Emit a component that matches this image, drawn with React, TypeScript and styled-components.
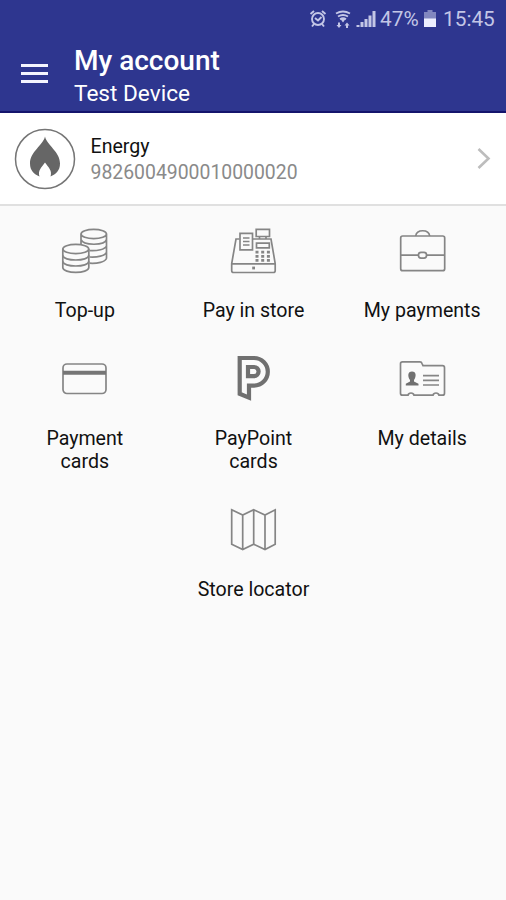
import React from 'react';
import styled, { createGlobalStyle } from 'styled-components';

const GlobalStyle = createGlobalStyle`
  * { box-sizing: border-box; }
  body { margin: 0; background: #fafafa; font-family: Roboto, sans-serif; }
`;

const Screen = styled.div`
  display: flex;
  flex-direction: column;
  width: 506px;
  height: 900px;
  overflow: hidden;
  background: #fafafa;
  color: #111;
`;

const Header = styled.header`
  height: 113px;
  background: #2e368f;
  border-bottom: 2px solid #14146c;
  color: #fff;
`;

const StatusBar = styled.div`
  display: flex;
  align-items: center;
  justify-content: flex-end;
  height: 38px;
  padding-right: 11px;
  color: #c3c6e6;
`;

const StatusIcons = styled.svg`
  display: block;
  width: 68px;
  height: 24px;
  margin-right: 4px;
`;

const BatteryIcon = styled.svg`
  display: block;
  width: 12px;
  height: 20px;
  margin: 0 7px 0 4px;
`;

const StatusText = styled.span<{ $width: number }>`
  width: ${(p) => p.$width}px;
  font-size: 20.8px;
  line-height: 24px;
  white-space: nowrap;
`;

const TitleRow = styled.div`
  display: flex;
  align-items: center;
  height: 70px;
  padding-left: 21px;
`;

const MenuButton = styled.button`
  display: flex;
  flex-direction: column;
  gap: 5px;
  width: 27px;
  padding: 0;
  border: 0;
  background: none;
`;

const MenuBar = styled.span`
  height: 3px;
  background: #f4f5ff;
`;

const Titles = styled.div`
  margin: 8px 0 0 26px;
`;

const Title = styled.h1`
  margin: 0;
  font-size: 28px;
  font-weight: 500;
  line-height: 34px;
`;

const Subtitle = styled.div`
  font-size: 22.6px;
  line-height: 32px;
`;

const Account = styled.section`
  display: flex;
  align-items: center;
  height: 93px;
  padding: 0 15px 0 14px;
  background: #fff;
  border-bottom: 2px solid #e0e0e0;
`;

const FlameBadge = styled.svg`
  width: 62px;
  height: 62px;
  flex: none;
`;

const AccountText = styled.div`
  flex: 1;
  margin-left: 14.5px;
  padding-top: 2px;
  font-size: 19.6px;
  line-height: 26px;
`;

const AccountNumber = styled.div`
  color: #8a8a8a;
  font-size: 19.4px;
`;

const Chevron = styled.svg`
  width: 14px;
  height: 24px;
`;

const Menu = styled.main`
  display: grid;
  grid-template-columns: repeat(3, 1fr);
`;

const Tile = styled.div<{ $column?: number }>`
  display: flex;
  flex-direction: column;
  align-items: center;
  padding: 20px 0 12px;
  ${(p) => p.$column && `grid-column: ${p.$column};`}
`;

const TileIcon = styled.svg`
  width: 48px;
  height: 48px;
  fill: none;
  stroke: #858585;
  stroke-width: 1.7;
`;

const TileLabel = styled.div`
  width: 130px;
  margin-top: 25px;
  padding-left: 1px;
  font-size: 19.6px;
  line-height: 23px;
  text-align: center;
`;

const Coins = () => (
  <TileIcon viewBox="0 0 48 48">
    <path d="M21 8v24.500M46.500 8v24.500M21 8a12.750 4.700 0 0 0 25.500 0a12.750 4.700 0 0 0-25.500 0M21 13.500c2 6.300 24 6.300 25.500 0M29.500 24.600c8 .5 15.500-1.200 17-4.600M29.500 31c8 .5 15.500-1.200 17-4.600M29.500 37.200c8 .5 15.500-1.200 17-4.700" />
    <path fill="#fafafa" d="M2.800 23v18.500c0 6.500 26 6.500 26 0V23a13 4.700 0 0 0-26 0Z" />
    <path d="M2.800 23a13 4.700 0 0 0 26 0M2.800 29.300c0 6.300 26 6.300 26 0M2.800 35.300c0 6.300 26 6.300 26 0" />
  </TileIcon>
);

const Register = () => (
  <TileIcon viewBox="0 0 48 48">
    <path d="M10.500 13H7L2.700 37.500v7.300q0 1.700 2 1.700h39.500q2 0 2-1.700v-7.300L42 13H24M2.700 37.800h43.500" />
    <path d="M11 7.300h12.500v16.500H11zM14 12h6.500M14 15.500h6.500M14 19h6.500M27.200 3.300h13.300v7.200H27.200zM30.500 10.500v2.500M37 10.500v2.500M27.500 17.200h12.800v4.600H27.500z" />
    <path strokeWidth="2.800" strokeDasharray="3 2.700" d="M26.500 26.200h15M26.500 30.300h15M26.500 34.400h15" />
    <path strokeWidth="2.800" d="M23.200 42H26" />
  </TileIcon>
);

const Briefcase = () => (
  <TileIcon viewBox="0 0 48 48">
    <rect x="2.700" y="10" width="44" height="34.700" rx="2" />
    <path d="M17.700 10c1-7 13-7 14 0M3 29.200h17.500M28.500 29.200h18" />
    <rect x="20.500" y="26.300" width="8" height="5.800" rx="2.500" />
  </TileIcon>
);

const Card = () => (
  <TileIcon viewBox="0 0 48 48">
    <rect x="3" y="10" width="43" height="29.500" rx="4" />
    <path stroke="#757575" strokeWidth="4" d="M3 18.800h43" />
  </TileIcon>
);

const PayPoint = () => (
  <TileIcon viewBox="0 0 48 48">
    <path stroke="#707070" strokeWidth="4.200" d="M10.700 4h14.300a13.800 13.800 0 0 1 0 27.600h-5v12l-9.300-3.800z" />
    <path stroke="#707070" strokeWidth="4.200" d="M19 13h6a4.600 4.600 0 0 1 0 9.200h-6z" />
  </TileIcon>
);

const Details = () => (
  <TileIcon viewBox="0 0 48 48">
    <path d="M4.500 7.800H22q1.500 0 2 1.700l1 2.200h19.500q2 0 2 2v25.500q0 2-2 2H41q-.5-2.200-3-2.200T35 41.200H16q-.5-2.200-3-2.200t-3 2.200H4.500q-2 0-2-2V9.800q0-2 2-2Z" />
    <path d="M25 21.700h16M25 26.400h16M25 31h16" />
    <path fill="#707070" stroke="none" d="M14 17.500c4.500 0 4.400 5 2 8.500v1.500l4.500 2.200V31.600H7.800v-1.900l4.200-2.200V26c-2.500-3.500-2.500-8.500 2-8.500Z" />
  </TileIcon>
);

const MapIcon = () => (
  <TileIcon viewBox="0 0 48 48">
    <path d="M2.700 4.800 13.700 10 24.700 4.800 36 10 46.200 4.800V39.200L36 44.500 24.700 39.200 13.700 44.500 2.700 39.200ZM13.700 10v34.500M24.700 4.800v34.400M36 10v34.500" />
  </TileIcon>
);

const tiles: { label: string; Icon: React.FC; column?: number }[] = [
  { label: 'Top-up', Icon: Coins },
  { label: 'Pay in store', Icon: Register },
  { label: 'My payments', Icon: Briefcase },
  { label: 'Payment cards', Icon: Card },
  { label: 'PayPoint cards', Icon: PayPoint },
  { label: 'My details', Icon: Details },
  { label: 'Store locator', Icon: MapIcon, column: 2 },
];

export default function App() {
  return (
    <Screen>
      <GlobalStyle />
      <Header>
        <StatusBar>
          <StatusIcons viewBox="0 0 68 24" fill="none" stroke="#c3c6e6" strokeWidth="1.900">
            <circle cx="10" cy="12" r="6" />
            <path d="m7 11 3 2.500 3.500-3.500M2.500 7 6 4M14 4l3.500 3M6 17l-2 2.500M14 17l2 2.500" />
            <path d="M28 6.500q7-4 14 0M30 9.500q5-3 10 0M32 12.300q3-2 6 0" />
            <path fill="#c3c6e6" stroke="none" d="m35 15.500-2.500-3.500h5zM32 15.500v2.500h1.500l-2.500 3-2.500-3H30v-2.500zM38 21h2v-2.500h1.500L39 15.500l-2.500 3H38z" />
            <path strokeWidth="3" d="M50 20v-2M54 20v-5M58 20v-8M62 20V8.500M66 20V4" />
          </StatusIcons>
          <StatusText $width={40}>47%</StatusText>
          <BatteryIcon viewBox="0 0 12 20">
            <path fill="#8187bf" d="M3.500 1h5v2H12v7H0V3h3.500z" />
            <path fill="#eceeff" d="M0 9.500h12V18H0z" />
          </BatteryIcon>
          <StatusText $width={52}>15:45</StatusText>
        </StatusBar>
        <TitleRow>
          <MenuButton aria-label="Menu">
            <MenuBar />
            <MenuBar />
            <MenuBar />
          </MenuButton>
          <Titles>
            <Title>My account</Title>
            <Subtitle>Test Device</Subtitle>
          </Titles>
        </TitleRow>
      </Header>
      <Account>
        <FlameBadge viewBox="0 0 62 62">
          <circle cx="31" cy="31" r="29.500" fill="none" stroke="#757575" strokeWidth="1.500" />
          <path fill="#666" d="M31 8.500c2 9 15 15 15 27 0 7-4 10.500-9.500 13 2-6-2-9-5.500-14-3.500 5-7.500 8-5.500 14C20 46 16 42.500 16 35.500c0-12 13-18 15-27Z" />
        </FlameBadge>
        <AccountText>
          <div>Energy</div>
          <AccountNumber>9826004900010000020</AccountNumber>
        </AccountText>
        <Chevron viewBox="0 0 14 24" fill="none" stroke="#bdbdbd" strokeWidth="2.600">
          <path d="m1.500 2 10 9.500-10 9.500" />
        </Chevron>
      </Account>
      <Menu>
        {tiles.map(({ label, Icon, column }) => (
          <Tile key={label} $column={column}>
            <Icon />
            <TileLabel>{label}</TileLabel>
          </Tile>
        ))}
      </Menu>
    </Screen>
  );
}
